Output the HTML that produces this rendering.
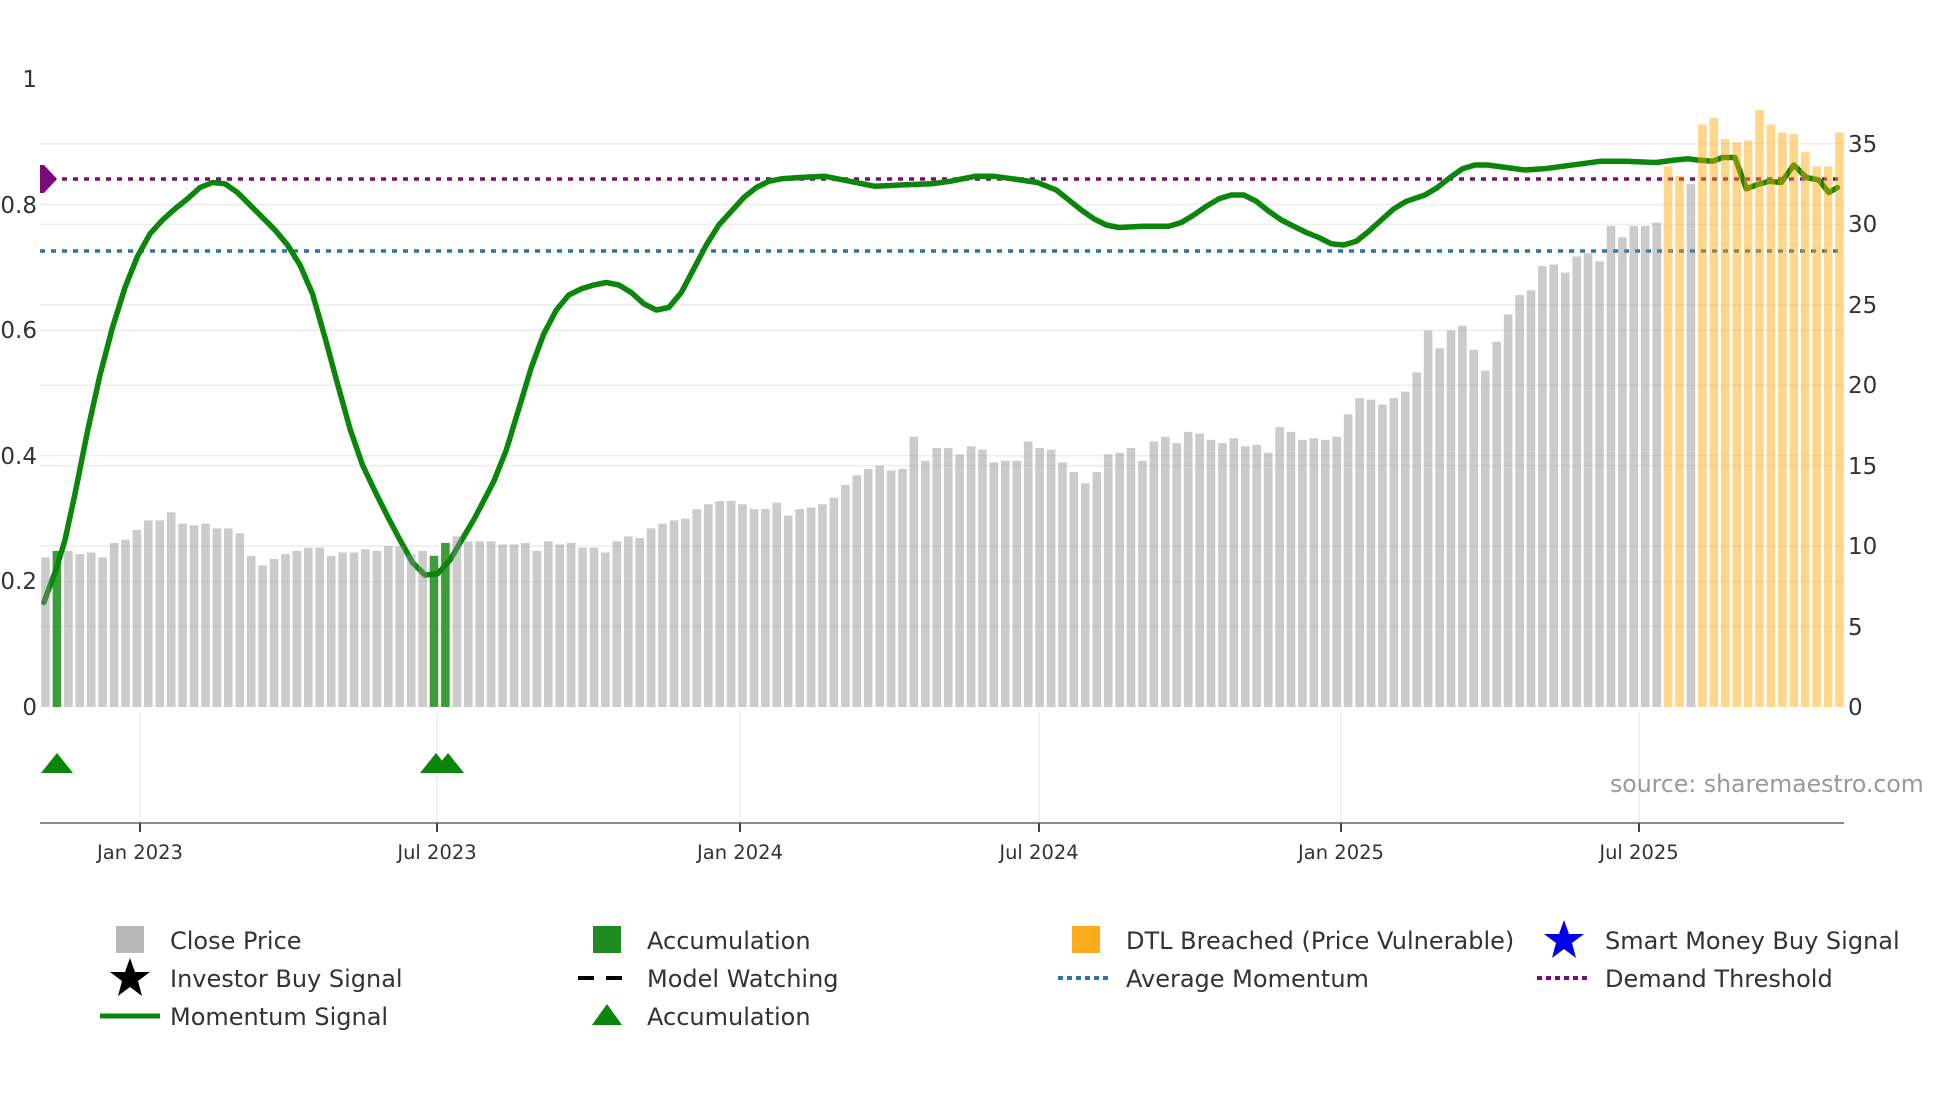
<!DOCTYPE html>
<html><head><meta charset="utf-8">
<style>
html,body{margin:0;padding:0;background:#fff;}
body{width:1960px;height:1102px;overflow:hidden;position:relative;font-family:"DejaVu Sans","Liberation Sans",sans-serif;color:#2a2a2a;}
svg text{font-family:"DejaVu Sans","Liberation Sans",sans-serif;}
</style></head>
<body>
<svg id="c" width="1960" height="1102" viewBox="0 0 1960 1102" xmlns="http://www.w3.org/2000/svg">
<g id="grid" stroke="#ececec" stroke-width="1.5"></g>
<g stroke="#ececf2" stroke-width="1.5">
<line x1="140" y1="712" x2="140" y2="823"/><line x1="437" y1="712" x2="437" y2="823"/>
<line x1="740" y1="712" x2="740" y2="823"/><line x1="1039" y1="712" x2="1039" y2="823"/>
<line x1="1341" y1="712" x2="1341" y2="823"/><line x1="1639" y1="712" x2="1639" y2="823"/>
</g>
<line x1="40" y1="179" x2="1844" y2="179" stroke="#7b0a7b" stroke-width="3.5" stroke-dasharray="5,6"/>
<line x1="40" y1="251" x2="1844" y2="251" stroke="#2a74a8" stroke-width="3.5" stroke-dasharray="5,6"/>
<polygon points="40,165 44,165 57,179 44,193 40,193" fill="#7b0a7b"/>
<polyline id="mom" fill="none" stroke="#0a860a" stroke-width="5.5" stroke-linejoin="round" stroke-linecap="round"/>
<g id="bars"></g>
<g fill="#0a860a">
<polygon points="41,773 57,753 73,773"/>
<polygon points="420,773 436,753 452,773"/>
<polygon points="432,773 448,753 464,773"/>
</g>
<line x1="40" y1="823" x2="1844" y2="823" stroke="#8a8a8a" stroke-width="2"/>
<g stroke="#444" stroke-width="2">
<line x1="140" y1="823" x2="140" y2="832"/><line x1="437" y1="823" x2="437" y2="832"/>
<line x1="740" y1="823" x2="740" y2="832"/><line x1="1039" y1="823" x2="1039" y2="832"/>
<line x1="1341" y1="823" x2="1341" y2="832"/><line x1="1639" y1="823" x2="1639" y2="832"/>
</g>
<g font-size="19.5" fill="#333" text-anchor="middle">
<text x="140" y="859">Jan 2023</text><text x="437" y="859">Jul 2023</text>
<text x="740" y="859">Jan 2024</text><text x="1039" y="859">Jul 2024</text>
<text x="1341" y="859">Jan 2025</text><text x="1639" y="859">Jul 2025</text>
</g>
<g font-size="23" fill="#333" text-anchor="end">
<text x="37" y="87">1</text><text x="37" y="213">0.8</text><text x="37" y="338">0.6</text>
<text x="37" y="464">0.4</text><text x="37" y="589">0.2</text><text x="37" y="715">0</text>
</g>
<g font-size="23" fill="#333">
<text x="1848" y="152">35</text><text x="1848" y="232">30</text><text x="1848" y="313">25</text>
<text x="1848" y="393">20</text><text x="1848" y="474">15</text><text x="1848" y="554">10</text>
<text x="1848" y="635">5</text><text x="1848" y="715">0</text>
</g>
<text x="1610" y="792" font-size="23.6" fill="#999">source: sharemaestro.com</text>

<!-- legend -->
<rect x="116" y="926" width="28" height="27" fill="#b8b8b8"/>
<rect x="593" y="926" width="28" height="27" fill="#1e8c1e"/>
<rect x="1072" y="926" width="28" height="27" fill="#fbac1c"/>
<polygon points="1564,920 1569,934 1584,934 1572,943 1576,958 1564,949 1552,958 1556,943 1544,934 1559,934" fill="#0000ee"/>
<polygon points="130,958 135,972 150,972 138,981 142,996 130,987 118,996 122,981 110,972 125,972" fill="#000"/>
<line x1="578" y1="978" x2="594" y2="978" stroke="#000" stroke-width="4"/>
<line x1="606" y1="978" x2="622" y2="978" stroke="#000" stroke-width="4"/>
<line x1="1058" y1="978" x2="1112" y2="978" stroke="#2a74a8" stroke-width="4" stroke-dasharray="5,4"/>
<line x1="1537" y1="978" x2="1591" y2="978" stroke="#7b0a7b" stroke-width="4" stroke-dasharray="5,4"/>
<line x1="100" y1="1016" x2="160" y2="1016" stroke="#0a860a" stroke-width="5"/>
<polygon points="592,1025 607,1004 622,1025" fill="#0a860a"/>
<g font-size="24" fill="#333">
<text x="170" y="949">Close Price</text>
<text x="170" y="987">Investor Buy Signal</text>
<text x="170" y="1025">Momentum Signal</text>
<text x="647" y="949">Accumulation</text>
<text x="647" y="987">Model Watching</text>
<text x="647" y="1025">Accumulation</text>
<text x="1126" y="949">DTL Breached (Price Vulnerable)</text>
<text x="1126" y="987">Average Momentum</text>
<text x="1605" y="949">Smart Money Buy Signal</text>
<text x="1605" y="987">Demand Threshold</text>
</g>
</svg>
<script>
(function(){
var NS="http://www.w3.org/2000/svg";
var g=document.getElementById("grid");
function ln(y){var l=document.createElementNS(NS,"line");l.setAttribute("x1",40);l.setAttribute("x2",1844);l.setAttribute("y1",y);l.setAttribute("y2",y);g.appendChild(l);}
for(var v=0.2;v<=0.81;v+=0.2)ln(707-v*628);
for(var r=5;r<=35;r+=5)ln(707-r*16.09);
var P=[9.3,9.7,9.7,9.5,9.6,9.3,10.2,10.4,11.0,11.6,11.6,12.1,11.4,11.3,11.4,11.1,11.1,10.8,9.4,8.8,9.2,9.5,9.7,9.9,9.9,9.4,9.6,9.6,9.8,9.7,10,10,9.5,9.7,9.4,10.2,10.6,10.3,10.3,10.3,10.1,10.1,10.2,9.7,10.3,10.1,10.2,9.9,9.9,9.6,10.3,10.6,10.5,11.1,11.4,11.6,11.7,12.3,12.6,12.8,12.8,12.6,12.3,12.3,12.7,11.9,12.3,12.4,12.6,13.0,13.8,14.4,14.8,15.0,14.7,14.8,16.8,15.3,16.1,16.1,15.7,16.2,16.0,15.2,15.3,15.3,16.5,16.1,16.0,15.2,14.6,13.9,14.6,15.7,15.8,16.1,15.3,16.5,16.8,16.4,17.1,17.0,16.6,16.4,16.7,16.2,16.3,15.8,17.4,17.1,16.6,16.7,16.6,16.8,18.2,19.2,19.1,18.8,19.2,19.6,20.8,23.4,22.3,23.4,23.7,22.2,20.9,22.7,24.4,25.6,25.9,27.4,27.5,27.0,28.0,28.2,27.7,29.9,29.2,29.9,29.9,30.1,33.6,33.0,32.5,36.2,36.6,35.3,35.1,35.2,37.1,36.2,35.7,35.6,34.5,33.6,33.6,35.7];
var n=P.length,step=(1839.5-45.5)/(n-1),bw=8.6,b=document.getElementById("bars");
for(var i=0;i<n;i++){
 var cx=45.5+i*step,h=P[i]*16.09,rc=document.createElementNS(NS,"rect");
 rc.setAttribute("x",(cx-bw/2).toFixed(1));rc.setAttribute("y",(707-h).toFixed(1));
 rc.setAttribute("width",bw);rc.setAttribute("height",h.toFixed(1));
 var f="rgba(140,140,140,0.45)";
 if(i==1||i==34||i==35)f="rgba(10,134,10,0.8)";
 else if(i>=142&&i!=144)f="rgba(255,165,0,0.46)";
 rc.setAttribute("fill",f);b.appendChild(rc);
}
var D=[[35,482],[45,455],[52,432],[60,395],[70,345],[80,300],[90,262],[100,230],[110,205],[120,187],[130,176],[140,167],[150,159],[160,150],[170,146],[180,147],[190,154],[200,164],[210,174],[220,184],[230,196],[240,212],[250,235],[260,270],[270,307],[280,343],[290,372],[300,393],[310,413],[320,432],[330,450],[340,460],[350,459],[360,448],[370,431],[380,414],[395,385],[405,360],[415,327],[425,294],[435,267],[445,248],[455,236],[465,231],[475,228],[485,226],[495,228],[505,234],[515,243],[525,248],[535,246],[545,234],[555,215],[565,196],[575,180],[585,169],[595,158],[605,150],[615,145],[625,143],[640,142],[660,141],[680,145],[700,149],[720,148],[745,147],[760,145],[780,141],[795,141],[810,143],[830,146],[845,152],[855,160],[865,168],[875,175],[885,180],[895,182],[915,181],[935,181],[945,178],[955,172],[965,165],[975,159],[985,156],[995,156],[1005,161],[1015,169],[1025,176],[1035,181],[1045,186],[1055,190],[1065,195],[1075,196],[1085,193],[1095,185],[1105,176],[1115,167],[1125,161],[1140,156],[1150,150],[1160,142],[1170,135],[1180,132],[1190,132],[1205,134],[1220,136],[1235,135],[1250,133],[1265,131],[1280,129],[1300,129],[1325,130],[1340,128],[1350,127],[1358,128],[1370,129],[1378,126],[1388,126],[1397,151],[1405,148],[1415,145],[1425,146],[1435,132],[1445,142],[1455,144],[1463,154],[1470,150]];
var s=D.map(function(p){return (p[0]*1.25).toFixed(1)+","+(p[1]*1.25).toFixed(1);}).join(" ");
document.getElementById("mom").setAttribute("points",s);
})();
</script>
</body></html>
